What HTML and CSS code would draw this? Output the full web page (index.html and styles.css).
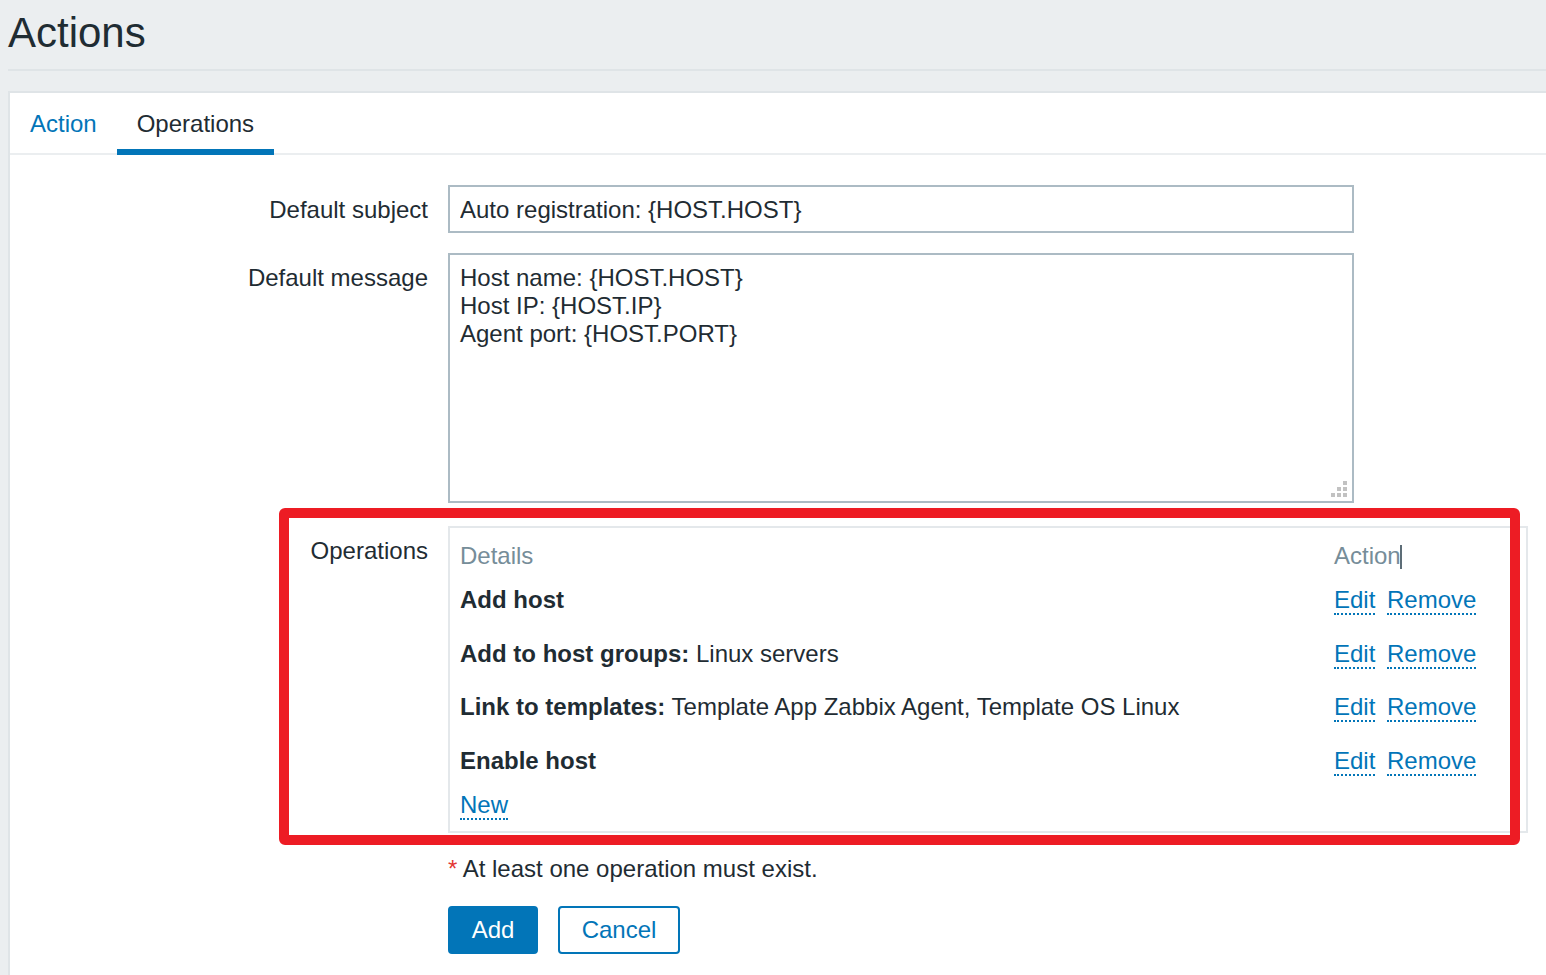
FILE: index.html
```html
<!DOCTYPE html>
<html lang="en">
<head>
<meta charset="utf-8">
<title>Actions</title>
<link rel="stylesheet" href="styles.css">
</head>
<body>
<header class="page-header">
  <h1 class="page-title">Actions</h1>
</header>
<main class="container">
  <nav class="tabs">
    <a class="tab">Action</a>
    <a class="tab tab-active">Operations</a>
  </nav>
  <form class="form">
    <div class="form-row row-subject">
      <label class="form-label">Default subject</label>
      <div class="form-field">
        <input class="input" type="text" value="Auto registration: {HOST.HOST}">
      </div>
    </div>
    <div class="form-row row-message">
      <label class="form-label">Default message</label>
      <div class="form-field textarea-wrap">
        <textarea class="textarea">Host name: {HOST.HOST}
Host IP: {HOST.IP}
Agent port: {HOST.PORT}</textarea>
        <svg class="grip" width="20" height="20" viewBox="0 0 20 20" aria-hidden="true">
          <rect x="15" y="3" width="4" height="4" fill="#c2c2c2"/>
          <rect x="9" y="9" width="4" height="4" fill="#c2c2c2"/>
          <rect x="15" y="9" width="4" height="4" fill="#c2c2c2"/>
          <rect x="3" y="15" width="4" height="4" fill="#c2c2c2"/>
          <rect x="9" y="15" width="4" height="4" fill="#c2c2c2"/>
          <rect x="15" y="15" width="4" height="4" fill="#c2c2c2"/>
        </svg>
      </div>
    </div>
    <div class="form-row row-ops">
      <label class="form-label">Operations</label>
      <div class="form-field">
        <div class="ops-box">
          <div class="ops-head">
            <span>Details</span>
            <span>Action<span class="caret"></span></span>
          </div>
          <div class="ops-row">
            <span><b>Add host</b></span>
            <span><a class="link">Edit</a> <a class="link">Remove</a></span>
          </div>
          <div class="ops-row">
            <span><b>Add to host groups:</b> Linux servers</span>
            <span><a class="link">Edit</a> <a class="link">Remove</a></span>
          </div>
          <div class="ops-row">
            <span><b>Link to templates:</b> Template App Zabbix Agent, Template OS Linux</span>
            <span><a class="link">Edit</a> <a class="link">Remove</a></span>
          </div>
          <div class="ops-row">
            <span><b>Enable host</b></span>
            <span><a class="link">Edit</a> <a class="link">Remove</a></span>
          </div>
          <div class="ops-foot"><a class="link">New</a></div>
        </div>
      </div>
      <div class="highlight"></div>
    </div>
    <div class="form-row row-hint">
      <span class="form-label"></span>
      <div class="form-field"><span class="asterisk">*</span> At least one operation must exist.</div>
    </div>
    <div class="form-row row-buttons">
      <span class="form-label"></span>
      <div class="form-field buttons">
        <button type="button" class="btn btn-primary">Add</button>
        <button type="button" class="btn btn-secondary">Cancel</button>
      </div>
    </div>
  </form>
</main>
</body>
</html>
```

FILE: styles.css
```css
* { box-sizing: border-box; }

body {
  margin: 0;
  background: #ebeef0;
  font-family: "Liberation Sans", Arial, sans-serif;
  color: #1f2c33;
  font-size: 24px;
  line-height: 24px;
  overflow: hidden;
}

.page-header {
  margin-left: 8px;
  padding: 12px 0 15px;
  border-bottom: 2px solid #dfe4e7;
}

.page-title {
  margin: 0;
  font-size: 42px;
  line-height: 42px;
  font-weight: normal;
  color: #1f2c33;
}

.container {
  margin: 20px 0 0 8px;
  background: #fff;
  border-top: 2px solid #dfe4e7;
  border-left: 2px solid #dfe4e7;
  min-height: 884px;
}

.tabs {
  display: flex;
  border-bottom: 2px solid #ebeef0;
}

.tab {
  padding: 19px 20px 13px;
  border-bottom: 6px solid transparent;
  margin-bottom: -2px;
  color: #0275b8;
  font-size: 24px;
  line-height: 24px;
}

.tab-active {
  color: #1f2c33;
  border-bottom-color: #0275b8;
}

.form-row {
  display: flex;
  align-items: flex-start;
}

.form-label {
  flex: 0 0 418px;
  margin-right: 20px;
  text-align: right;
  padding-top: 12px;
  line-height: 24px;
}

.row-subject { margin-top: 30px; }
.row-subject .form-label { padding-top: 12.5px; }
.row-message { margin-top: 20px; }
.row-message .form-label { padding-top: 12.5px; }
.row-ops { margin-top: 23px; position: relative; }
.row-ops .form-label { padding-top: 13px; }
.row-hint { margin-top: 24px; }
.row-hint .form-label { padding-top: 0; }
.row-buttons { margin-top: 25px; }
.row-buttons .form-label { padding-top: 0; }

.input {
  display: block;
  width: 906px;
  height: 48px;
  border: 2px solid #acbbc4;
  padding: 1px 10px 0;
  font-family: "Liberation Sans", Arial, sans-serif;
  font-size: 24px;
  color: #1f2c33;
  background: #fff;
  outline: none;
}

.textarea-wrap {
  position: relative;
  width: 906px;
  height: 250px;
}

.textarea {
  display: block;
  width: 906px;
  height: 250px;
  border: 2px solid #acbbc4;
  padding: 8.5px 10px;
  font-family: "Liberation Sans", Arial, sans-serif;
  font-size: 24px;
  line-height: 28px;
  color: #1f2c33;
  background: #fff;
  resize: none;
  overflow: hidden;
  outline: none;
}

.grip {
  position: absolute;
  left: 880px;
  top: 225px;
}

.ops-box {
  width: 1080px;
  border: 2px solid #e4e8eb;
}

.ops-head,
.ops-row {
  display: grid;
  grid-template-columns: 1fr 182px;
  line-height: 24px;
}

.ops-head {
  padding: 16px 10px 4px;
  color: #768d99;
}

.ops-row {
  padding: 15px 10px 14.67px;
}

.ops-row b { font-weight: bold; }

.ops-foot {
  padding: 5px 10px 14.5px;
  line-height: 24px;
}

.caret {
  display: inline-block;
  width: 2px;
  height: 24px;
  margin-left: -1px;
  background: #5d6d77;
  vertical-align: -5px;
}

.link {
  color: #0275b8;
  text-decoration: none;
  border-bottom: 2px dotted #0275b8;
  cursor: pointer;
}

.link + .link { margin-left: 5px; }

.highlight {
  position: absolute;
  left: 269px;
  top: -18px;
  width: 1241px;
  height: 337px;
  border: 10px solid #ed1c24;
  border-radius: 6px;
  pointer-events: none;
}

.asterisk {
  color: #e33734;
}

.buttons {
  display: flex;
  gap: 20px;
}

.btn {
  height: 48px;
  padding: 0;
  border: 2px solid #0275b8;
  border-radius: 4px;
  font-family: "Liberation Sans", Arial, sans-serif;
  font-size: 24px;
  line-height: 24px;
  text-align: center;
  cursor: pointer;
}

.btn-primary {
  width: 90px;
  background: #0275b8;
  color: #fff;
}

.btn-secondary {
  width: 122px;
  background: #fff;
  color: #0275b8;
}
```
